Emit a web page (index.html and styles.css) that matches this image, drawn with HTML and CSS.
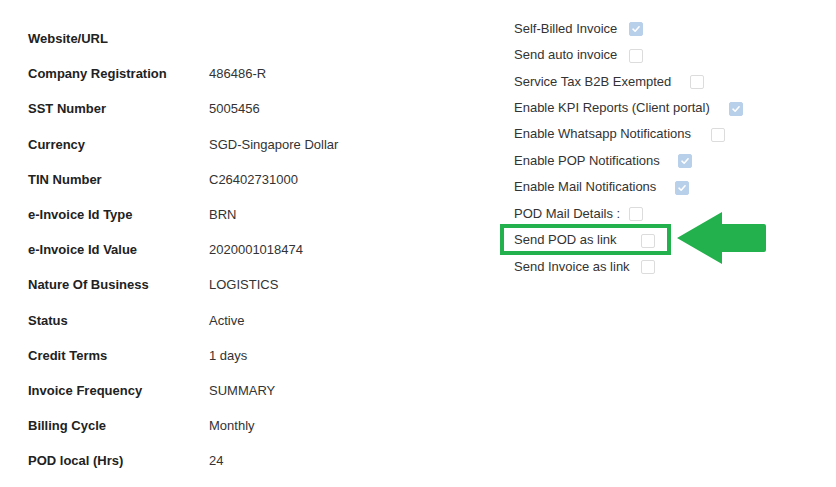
FILE: index.html
```html
<!DOCTYPE html>
<html>
<head>
<meta charset="utf-8">
<link rel="stylesheet" href="styles.css">
</head>
<body>
<div class="page">
  <div class="details">
    <div class="k">Website/URL</div><div class="v"></div>
    <div class="k">Company Registration</div><div class="v">486486-R</div>
    <div class="k">SST Number</div><div class="v">5005456</div>
    <div class="k">Currency</div><div class="v">SGD-Singapore Dollar</div>
    <div class="k">TIN Number</div><div class="v">C26402731000</div>
    <div class="k">e-Invoice Id Type</div><div class="v">BRN</div>
    <div class="k">e-Invoice Id Value</div><div class="v">2020001018474</div>
    <div class="k">Nature Of Business</div><div class="v">LOGISTICS</div>
    <div class="k">Status</div><div class="v">Active</div>
    <div class="k">Credit Terms</div><div class="v">1 days</div>
    <div class="k">Invoice Frequency</div><div class="v">SUMMARY</div>
    <div class="k">Billing Cycle</div><div class="v">Monthly</div>
    <div class="k">POD local (Hrs)</div><div class="v">24</div>
  </div>
  <div class="options">
    <div class="opt"><span class="lbl w115">Self-Billed Invoice</span><span class="cb on"><svg viewBox="0 0 14 14"><path d="M3.5 7.2 L6 9.6 L10.6 4.4" /></svg></span></div>
    <div class="opt"><span class="lbl w115">Send auto invoice</span><span class="cb"></span></div>
    <div class="opt"><span class="lbl w176">Service Tax B2B Exempted</span><span class="cb"></span></div>
    <div class="opt"><span class="lbl w215">Enable KPI Reports (Client portal)</span><span class="cb on"><svg viewBox="0 0 14 14"><path d="M3.5 7.2 L6 9.6 L10.6 4.4" /></svg></span></div>
    <div class="opt"><span class="lbl w197">Enable Whatsapp Notifications</span><span class="cb"></span></div>
    <div class="opt"><span class="lbl w164">Enable POP Notifications</span><span class="cb on"><svg viewBox="0 0 14 14"><path d="M3.5 7.2 L6 9.6 L10.6 4.4" /></svg></span></div>
    <div class="opt"><span class="lbl w161">Enable Mail Notifications</span><span class="cb on"><svg viewBox="0 0 14 14"><path d="M3.5 7.2 L6 9.6 L10.6 4.4" /></svg></span></div>
    <div class="opt"><span class="lbl w115">POD Mail Details :</span><span class="cb"></span></div>
    <div class="opt highlight-row">
      <span class="hl-box"></span>
      <span class="lbl w127">Send POD as link</span><span class="cb"></span>
      <svg class="arrow" viewBox="0 0 92 54"><path d="M0 26 L45 0 L45 12 L87 12 Q89 12 89 14 L89 38 Q89 40 87 40 L45 40 L45 52 Z" fill="#22b14c"/></svg>
    </div>
    <div class="opt"><span class="lbl w127">Send Invoice as link</span><span class="cb"></span></div>
  </div>
</div>
</body>
</html>
```
FILE: styles.css
```css
* { box-sizing: border-box; }
html, body {
  margin: 0;
  padding: 0;
  background: #fff;
}
body {
  font-family: "Liberation Sans", Arial, sans-serif;
  font-size: 13px;
  color: #333;
  width: 836px;
  height: 487px;
  overflow: hidden;
}
.page {
  display: flex;
}
.details {
  width: 514px;
  padding-left: 28px;
  padding-top: 21px;
  display: grid;
  grid-template-columns: 181px auto;
  grid-auto-rows: 35.2px;
  align-items: center;
}
.k {
  font-weight: bold;
  color: #222;
}
.v {
  color: #333;
}
.options {
  padding-top: 15px;
  display: flex;
  flex-direction: column;
}
.opt {
  height: 26.45px;
  display: flex;
  align-items: center;
  position: relative;
}
.lbl { display: inline-block; }
.w115 { width: 115px; }
.w127 { width: 127px; }
.w161 { width: 161px; }
.w164 { width: 164px; }
.w176 { width: 176px; }
.w197 { width: 197px; }
.w215 { width: 215px; }
.cb {
  width: 14px;
  height: 14px;
  border: 1px solid #dcdcdc;
  border-radius: 2px;
  background: #fff;
  margin-top: 2px;
  display: inline-flex;
}
.cb.on {
  background: #b9d0ea;
  border-color: #b9d0ea;
}
.cb svg {
  width: 12px;
  height: 12px;
}
.cb svg path {
  fill: none;
  stroke: #fff;
  stroke-width: 1.8;
  stroke-linecap: round;
  stroke-linejoin: round;
}
.hl-box {
  position: absolute;
  left: -14px;
  top: -3px;
  width: 171px;
  height: 31px;
  border: 4px solid #22b14c;
}
.arrow {
  position: absolute;
  left: 163px;
  top: -15px;
  width: 92px;
  height: 54px;
}
```
